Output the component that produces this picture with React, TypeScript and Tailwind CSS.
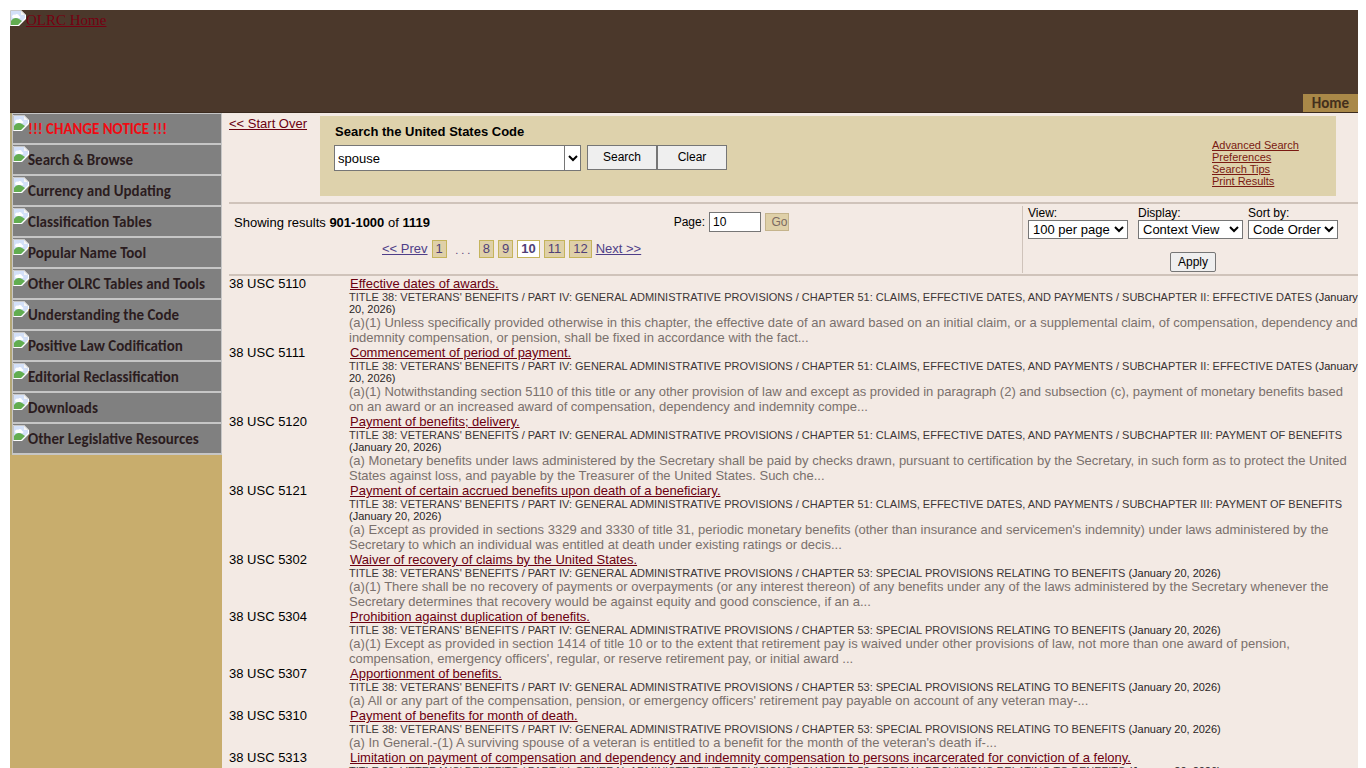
import React from 'react';

const navItems = [
  'Search & Browse',
  'Currency and Updating',
  'Classification Tables',
  'Popular Name Tool',
  'Other OLRC Tables and Tools',
  'Understanding the Code',
  'Positive Law Codification',
  'Editorial Reclassification',
  'Downloads',
  'Other Legislative Resources',
];

const toolLinks = ['Advanced Search', 'Preferences', 'Search Tips', 'Print Results'];

const base = "TITLE 38: VETERANS' BENEFITS / PART IV: GENERAL ADMINISTRATIVE PROVISIONS / ";
const chapter51 = base + 'CHAPTER 51: CLAIMS, EFFECTIVE DATES, AND PAYMENTS / ';
const chapter53 = base + 'CHAPTER 53: SPECIAL PROVISIONS RELATING TO BENEFITS';

const results = [
  {
    cite: '38 USC 5110',
    title: 'Effective dates of awards.',
    path: chapter51 + 'SUBCHAPTER II: EFFECTIVE DATES',
    text: '(a)(1) Unless specifically provided otherwise in this chapter, the effective date of an award based on an initial claim, or a supplemental claim, of compensation, dependency and indemnity compensation, or pension, shall be fixed in accordance with the fact...',
  },
  {
    cite: '38 USC 5111',
    title: 'Commencement of period of payment.',
    path: chapter51 + 'SUBCHAPTER II: EFFECTIVE DATES',
    text: '(a)(1) Notwithstanding section 5110 of this title or any other provision of law and except as provided in paragraph (2) and subsection (c), payment of monetary benefits based on an award or an increased award of compensation, dependency and indemnity compe...',
  },
  {
    cite: '38 USC 5120',
    title: 'Payment of benefits; delivery.',
    path: chapter51 + 'SUBCHAPTER III: PAYMENT OF BENEFITS',
    text: '(a) Monetary benefits under laws administered by the Secretary shall be paid by checks drawn, pursuant to certification by the Secretary, in such form as to protect the United States against loss, and payable by the Treasurer of the United States. Such che...',
  },
  {
    cite: '38 USC 5121',
    title: 'Payment of certain accrued benefits upon death of a beneficiary.',
    path: chapter51 + 'SUBCHAPTER III: PAYMENT OF BENEFITS',
    text: "(a) Except as provided in sections 3329 and 3330 of title 31, periodic monetary benefits (other than insurance and servicemen's indemnity) under laws administered by the Secretary to which an individual was entitled at death under existing ratings or decis...",
  },
  {
    cite: '38 USC 5302',
    title: 'Waiver of recovery of claims by the United States.',
    path: chapter53,
    text: '(a)(1) There shall be no recovery of payments or overpayments (or any interest thereon) of any benefits under any of the laws administered by the Secretary whenever the Secretary determines that recovery would be against equity and good conscience, if an a...',
  },
  {
    cite: '38 USC 5304',
    title: 'Prohibition against duplication of benefits.',
    path: chapter53,
    text: "(a)(1) Except as provided in section 1414 of title 10 or to the extent that retirement pay is waived under other provisions of law, not more than one award of pension, compensation, emergency officers', regular, or reserve retirement pay, or initial award ...",
  },
  {
    cite: '38 USC 5307',
    title: 'Apportionment of benefits.',
    path: chapter53,
    text: "(a) All or any part of the compensation, pension, or emergency officers' retirement pay payable on account of any veteran may-...",
  },
  {
    cite: '38 USC 5310',
    title: 'Payment of benefits for month of death.',
    path: chapter53,
    text: "(a) In General.-(1) A surviving spouse of a veteran is entitled to a benefit for the month of the veteran's death if-...",
  },
  {
    cite: '38 USC 5313',
    title: 'Limitation on payment of compensation and dependency and indemnity compensation to persons incarcerated for conviction of a felony.',
    path: chapter53,
    text: '',
  },
];

const BrokenImage = () => (
  <svg viewBox="0 0 16 16" className="w-4 h-4 shrink-0" aria-hidden="true">
    <path d="M0 0h11l5 5v4l-7 7H0z" fill="#fff" />
    <path d="M1 1h10v4h4v3l-7 7H1z" fill="#d3e0f8" />
    <path d="M2 7c0-2 2-3 3-2 1-2 4-1 4 1 1 0 2 1 1 2H3z" fill="#fff" />
    <path d="M1 15v-4c2-3 5-4 8-2l3 2-4 4z" fill="#62ad50" />
    <path d="M11 1v4h4z" fill="#f5f5f5" />
    <path d="M.5 15.500V.5H11l4.500 4.500" fill="none" stroke="#c8c8c8" />
  </svg>
);

const Dropdown = ({ id, label, width, option }: { id: string; label: string; width: string; option: string }) => (
  <div className={width}>
    <label htmlFor={id} className="block text-[12px] leading-[14px]">{label}</label>
    <div className="relative">
      <select
        id={id}
        className="block appearance-none w-full h-[19px] pl-1 pr-[14px] border border-[#767676] bg-white text-[13px] leading-4"
      >
        <option>{option}</option>
      </select>
      <svg viewBox="0 0 10 7" className="absolute right-1 top-[6px] w-[10px] h-[7px] pointer-events-none">
        <path d="M1 1l4 4 4-4" fill="none" stroke="#000" strokeWidth="2" />
      </svg>
    </div>
  </div>
);

const PageLink = ({ page }: { page: string }) => (
  <a
    href="#"
    className={`px-[3px] border border-[#c5b45c] text-[#4f3f78] leading-4 ${page === '10' ? 'bg-white font-bold' : 'bg-[#dfd0a8]'}`}
  >
    {page}
  </a>
);

const NavLink = ({ label, color }: { label: string; color: string }) => (
  <li className="h-[31px] border-b-2 border-[#c6c6c6] bg-[#808080]">
    <a href="#" className={`flex h-full leading-[30px] ${color}`}>
      <span className="w-[15px] pt-px"><BrokenImage /></span>
      {label}
    </a>
  </li>
);

const Header = () => (
  <header className="flex justify-between h-[103px] bg-[#4b382b] border-b border-[#3a2a1e]">
    <a href="#" className="flex h-5 items-start text-[#760012] underline text-[15px] leading-5 font-['Liberation_Serif',serif]">
      <BrokenImage />
      OLRC Home
    </a>
    <a
      href="#"
      className="self-end flex items-center h-[18px] px-[9px] bg-[#a98848] text-[#44301c] text-[15px] font-bold font-['Carlito','Lato',sans-serif]"
    >
      Home
    </a>
  </header>
);

const Sidebar = () => (
  <nav className="w-[212px] shrink-0 bg-[#c8ad6d] font-['Carlito','Lato',sans-serif] font-bold text-[15px]">
    <ul className="bg-[#c6c6c6] border-l-2 border-[#b5a878] pt-px pl-px pr-px">
      <NavLink label="!!! CHANGE NOTICE !!!" color="text-[#f00b12]" />
      {navItems.map((item) => (
        <NavLink key={item} label={item} color="text-[#2b1c1e]" />
      ))}
    </ul>
  </nav>
);

const SearchBox = () => (
  <div className="flex pt-[3px]">
    <div className="w-[91px] shrink-0">
      <a href="#" className="text-[#6b0010] underline">&lt;&lt; Start Over</a>
    </div>
    <form className="flex grow justify-between h-20 mr-[22px] pl-[14px] pr-9 bg-[#ded2ac]" onSubmit={(e) => e.preventDefault()}>
      <div className="pt-2">
        <label htmlFor="query" className="block font-bold leading-4 pl-px">Search the United States Code</label>
        <div className="flex items-start pt-[5px]">
          <input
            id="query"
            defaultValue="spouse"
            className="w-[231px] h-[26px] pl-[3px] border border-[#767676] bg-white"
          />
          <button
            type="button"
            aria-label="Recent searches"
            className="flex items-center justify-center w-4 h-[26px] mr-[6px] border border-l-0 border-[#767676] bg-white"
          >
            <svg viewBox="0 0 10 7" className="w-[10px] h-[7px]">
              <path d="M1 1l4 4 4-4" fill="none" stroke="#000" strokeWidth="2" />
            </svg>
          </button>
          <button type="submit" className="w-[70px] h-[25px] border border-[#767676] bg-[#efefef] text-[12px]">Search</button>
          <button type="reset" className="w-[70px] h-[25px] border border-[#767676] bg-[#efefef] text-[12px]">Clear</button>
        </div>
      </div>
      <div className="flex flex-col items-start w-[88px] pt-[23px] text-[11px] leading-3">
        {toolLinks.map((link) => (
          <a key={link} href="#" className="text-[#7a1a12] underline whitespace-nowrap">{link}</a>
        ))}
      </div>
    </form>
  </div>
);

const ResultsBar = () => (
  <div className="flex mt-[6px] pt-[2px] border-y-2 border-[#cfc3ba] h-[74px]">
    <div className="grow">
      <div className="flex items-center justify-between h-[22px] mt-[5px] pl-[5px] pr-[233px]">
        <p>
          Showing results <b>901-1000</b> of <b>1119</b>
        </p>
        <form className="flex items-center" onSubmit={(e) => e.preventDefault()}>
          <label htmlFor="page" className="text-[12px] mr-1">Page:</label>
          <input id="page" defaultValue="10" className="w-[52px] h-5 pl-[3px] border border-[#767676] bg-white text-[12px]" />
          <button type="submit" className="w-6 h-[18px] ml-1 pl-[5px] border border-[#c5b48c] bg-[#dfd0a8] text-[12px] leading-4 text-[#7b6a62]">
            Go
          </button>
        </form>
      </div>
      <div className="flex gap-1 h-[18px] mt-[7px] pl-[153px]">
        <a href="#" className="text-[#4f3f88] underline leading-[18px]">&lt;&lt; Prev</a>
        <PageLink page="1" />
        <span className="w-6 text-center text-[11px] leading-[20px] text-[#4f3f78]">. . .</span>
        <PageLink page="8" />
        <PageLink page="9" />
        <PageLink page="10" />
        <PageLink page="11" />
        <PageLink page="12" />
        <a href="#" className="text-[#4f3f88] underline leading-[18px]">Next &gt;&gt;</a>
      </div>
    </div>
    <form className="w-[336px] shrink-0 mb-px pl-[5px] border-l border-[#cfc3ba]" onSubmit={(e) => e.preventDefault()}>
      <div className="flex">
        <Dropdown id="view" label="View:" width="w-[100px] mr-[10px]" option="100 per page" />
        <Dropdown id="display" label="Display:" width="w-[105px] mr-[5px]" option="Context View" />
        <Dropdown id="sort" label="Sort by:" width="w-[90px]" option="Code Order" />
      </div>
      <button type="submit" className="block w-[46px] h-5 mt-[13px] ml-[142px] border border-[#767676] bg-[#efefef] rounded-[2px] text-[12px] leading-4">
        Apply
      </button>
    </form>
  </div>
);

const ResultsTable = () => (
  <table className="w-full">
    <tbody>
      {results.map((result) => (
        <tr key={result.cite} className="align-top">
          <td className="w-[120px]">{result.cite}</td>
          <td>
            <a href="#" className="block w-fit ml-px text-[#6b0010] underline">{result.title}</a>
            <div className="text-[11px] leading-3 text-[#3c3636]">
              {result.path} <span className="text-[#2a2424]">(January 20, 2026)</span>
            </div>
            <div className="text-[#7a706c]">{result.text}</div>
          </td>
        </tr>
      ))}
    </tbody>
  </table>
);

export default function App() {
  return (
    <div className="min-h-screen pt-[10px] pl-[10px] pr-2 bg-white text-black text-[13px] leading-[15px] font-['Liberation_Sans',sans-serif]">
      <Header />
      <div className="flex">
        <Sidebar />
        <main className="grow min-w-0 pl-[7px] bg-[#f3eae4]">
          <SearchBox />
          <ResultsBar />
          <ResultsTable />
        </main>
      </div>
    </div>
  );
}
